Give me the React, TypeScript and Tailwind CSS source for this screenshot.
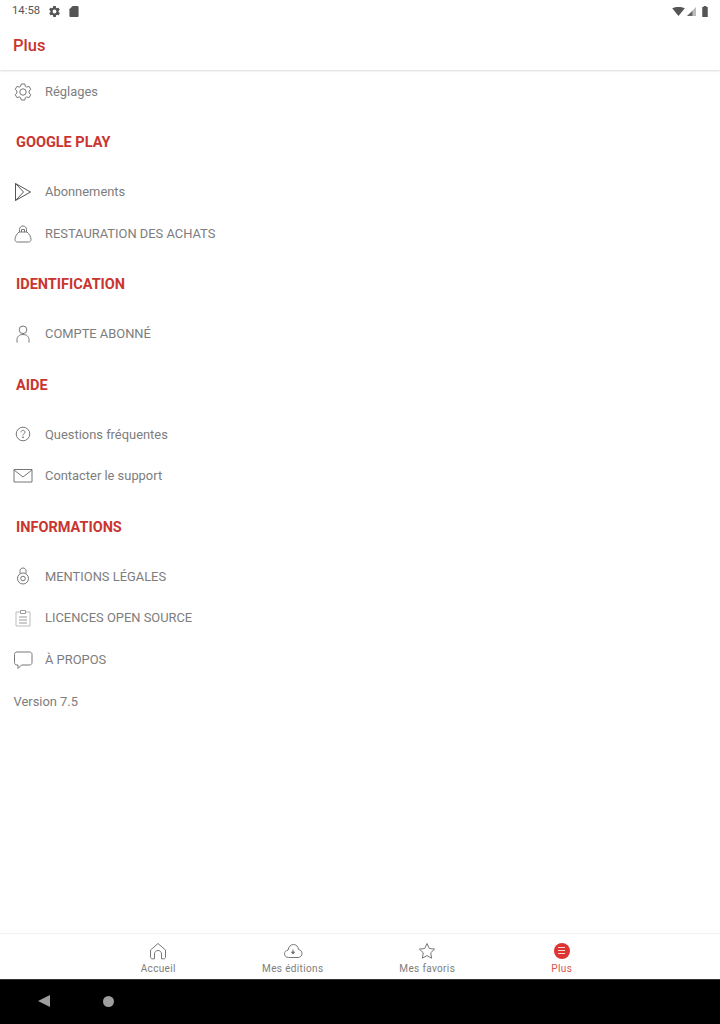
import type { ReactNode } from 'react';

const font = { fontFamily: 'Roboto, sans-serif' };

function Icon({ children, className = 'w-[20px] h-[20px]' }: { children: ReactNode; className?: string }) {
  return (
    <svg viewBox="0 0 20 20" fill="none" stroke="#777" strokeWidth="1" className={className}>
      {children}
    </svg>
  );
}

const GearIcon = () => (
  <Icon>
    <path d="M8.2 2h3.6l.5 2.3 1.5.8 2.2-.8 1.8 3.1-1.7 1.5v2.2l1.7 1.5-1.8 3.1-2.2-.8-1.5.8-.5 2.3H8.2l-.5-2.300-1.500-.8-2.200.8-1.800-3.100 1.700-1.500V8.900L2.200 7.400 4 4.300l2.200.8 1.500-.8z" strokeLinejoin="round" />
    <circle cx="10" cy="10" r="3.2" />
  </Icon>
);
const PlayIcon = () => (
  <Icon>
    <path d="M2.5 1.500 17.500 10 2.500 18.500z M2.500 1.500 10.500 10 2.500 18.500" strokeLinejoin="round" stroke="#555" />
  </Icon>
);
const BagIcon = () => (
  <Icon>
    <path d="M6 8C3.500 10 2 13 2 15.500 2 17 3 18 4.500 18h11c1.500 0 2.500-1 2.500-2.500C18 13 16.500 10 14 8z" strokeLinejoin="round" />
    <path d="M6.500 8V5.500C6.500 3.500 8 2 10 2s3.500 1.500 3.500 3.500V8" />
    <path d="M8.500 8V5.500h3V8" />
  </Icon>
);
const PersonIcon = () => (
  <Icon>
    <circle cx="10" cy="5.800" r="3.800" />
    <path d="M4 18.500v-3c0-3 2.500-5 6-5s6 2 6 5v3" />
  </Icon>
);
const QuestionIcon = () => (
  <Icon>
    <circle cx="10" cy="10" r="6.800" />
    <path d="M8 8.300c0-1.200.9-2 2-2s2 .8 2 1.900c0 1.600-2 1.600-2 3.200" />
    <circle cx="10" cy="13.300" r=".5" fill="#777" />
  </Icon>
);
const MailIcon = () => (
  <Icon>
    <path d="M1 3.500h18v12.500H1z" />
    <path d="M1 4 10 11l9-7" />
  </Icon>
);
const LockIcon = () => (
  <Icon>
    <path d="M7 7.500V4.800C7 3.200 8.300 2 10 2s3 1.200 3 2.800v2.700" />
    <circle cx="10" cy="12.500" r="5.500" />
    <circle cx="10" cy="12.500" r="2.300" />
  </Icon>
);
const ClipboardIcon = () => (
  <Icon>
    <path d="M7 4H3v14h14V4h-4" stroke="#bbb" />
    <path d="M7.500 5.500V2.500h5v3z" stroke="#999" />
    <path d="M6 9h8M6 12h8M6 15h8" stroke="#999" />
  </Icon>
);
const ChatIcon = () => (
  <Icon>
    <path d="M4 2h12.500C18 2 19 3 19 4.500v8c0 1.500-1 2.500-2.500 2.500H8.500L5 18.500V15H4c-1.500 0-2.500-1-2.500-2.500v-8C1.500 3 2.500 2 4 2z" strokeLinejoin="round" />
  </Icon>
);

function Row({ icon, label }: { icon: ReactNode; label: string }) {
  return (
    <div className="flex items-center h-[41.67px]">
      <div className="w-[45px] pl-[12.5px] flex-none">{icon}</div>
      <span className="text-[12.9px] text-[#7d7d7d]">{label}</span>
    </div>
  );
}

function Heading({ children }: { children: string }) {
  return (
    <div className="h-[58.67px] pl-[16px] pt-[2.5px] flex items-center text-[14.5px] font-bold text-[#c9352f]">
      {children}
    </div>
  );
}

function NavItem({ icon, label, active }: { icon: ReactNode; label: string; active?: boolean }) {
  return (
    <div className="w-[134.5px] flex flex-col items-center">
      <div className="h-[21px] flex items-center justify-center">{icon}</div>
      <span className={`text-[10px] tracking-[0.35px] leading-[15px] ${active ? 'text-[#d9534f]' : 'text-[#7d7d7d]'}`}>
        {label}
      </span>
    </div>
  );
}

export default function App() {
  return (
    <div className="w-[720px] h-[1024px] flex flex-col bg-white overflow-hidden" style={font}>
      {/* status bar */}
      <div className="h-[22px] flex-none flex items-center px-[12px] justify-between">
        <div className="flex items-center gap-[8px]">
          <span className="text-[11.3px] text-[#555]">14:58</span>
          <svg viewBox="0 0 24 24" fill="#555" className="w-[13px] h-[13px]">
            <path d="M19.400 13c.1-.3.1-.7.1-1s0-.7-.1-1l2.100-1.600c.2-.1.2-.4.1-.6l-2-3.500c-.1-.2-.4-.3-.6-.2l-2.500 1c-.5-.4-1.100-.7-1.700-1l-.4-2.600c0-.3-.2-.5-.5-.5h-4c-.3 0-.5.2-.5.400l-.4 2.700c-.6.2-1.100.6-1.700 1l-2.500-1c-.2-.1-.5 0-.6.2l-2 3.500c-.1.2-.1.5.1.6L4.600 11c0 .3-.1.7-.1 1s0 .7.1 1l-2.100 1.600c-.2.1-.2.4-.1.6l2 3.500c.1.2.4.3.6.2l2.500-1c.5.4 1.100.7 1.700 1l.4 2.600c0 .3.2.5.5.5h4c.3 0 .5-.2.5-.4l.4-2.700c.6-.2 1.200-.6 1.700-1l2.500 1c.2.1.5 0 .6-.2l2-3.500c.1-.2.1-.5-.1-.6zM12 15.500a3.500 3.500 0 1 1 0-7 3.500 3.500 0 0 1 0 7z" />
          </svg>
          <svg viewBox="0 0 10 12" fill="#555" className="w-[10px] h-[11px]">
            <path d="M3.500 0H9c.6 0 1 .4 1 1v10c0 .6-.4 1-1 1H1c-.6 0-1-.4-1-1V3.500z" />
          </svg>
        </div>
        <div className="flex items-center">
          <svg viewBox="0 0 14 10" fill="#555" className="w-[13px] h-[9px]">
            <path d="M0 1.500C4 -.5 10 -.5 14 1.500L7 10z" />
          </svg>
          <svg viewBox="0 0 10 10" className="w-[9px] h-[9px] ml-[2px]">
            <path d="M10 0v10H0z" fill="#bbb" />
            <path d="M6 4.500V10H0z" fill="#666" />
          </svg>
          <svg viewBox="0 0 6 12" fill="#555" className="w-[6px] h-[11px] ml-[6px]">
            <path d="M1.500 0h3v1H6v11H0V1h1.500z" />
          </svg>
        </div>
      </div>

      {/* top bar */}
      <div className="h-[48px] flex-none flex items-center pl-[13px] text-[16.5px] font-medium text-[#c9352f] shadow-[0_1px_2px_rgba(0,0,0,0.15)] relative">
        Plus
      </div>

      {/* menu */}
      <div className="flex-1 pt-[1px]">
        <Row icon={<GearIcon />} label="Réglages" />
        <Heading>GOOGLE PLAY</Heading>
        <Row icon={<PlayIcon />} label="Abonnements" />
        <Row icon={<BagIcon />} label="RESTAURATION DES ACHATS" />
        <Heading>IDENTIFICATION</Heading>
        <Row icon={<PersonIcon />} label="COMPTE ABONNÉ" />
        <Heading>AIDE</Heading>
        <Row icon={<QuestionIcon />} label="Questions fréquentes" />
        <Row icon={<MailIcon />} label="Contacter le support" />
        <Heading>INFORMATIONS</Heading>
        <Row icon={<LockIcon />} label="MENTIONS LÉGALES" />
        <Row icon={<ClipboardIcon />} label="LICENCES OPEN SOURCE" />
        <Row icon={<ChatIcon />} label="À PROPOS" />
        <div className="h-[41.67px] flex items-center pl-[13.5px] text-[12.9px] text-[#7d7d7d]">Version 7.5</div>
      </div>

      {/* bottom nav */}
      <div className="h-[46px] flex-none flex justify-center pt-[6px] border-t border-[#f3f3f3]">
        <NavItem
          label="Accueil"
          icon={
            <Icon>
              <path d="M2.500 9 10 2.500 17.500 9v7c0 1-.7 1.800-1.700 1.800H13.500V13c0-2-1.500-3.500-3.500-3.500S6.500 11 6.500 13v4.800H4.200c-1 0-1.700-.8-1.700-1.800z" strokeLinejoin="round" />
            </Icon>
          }
        />
        <NavItem
          label="Mes éditions"
          icon={
            <Icon>
              <path d="M5.500 16.500C3 16.500 1.500 14.700 1.500 12.800c0-2 1.500-3.500 3.500-3.600C5.500 6 7.500 3.500 10.500 3.500c2.800 0 4.700 2.200 5 5 2 .3 3.500 1.800 3.500 3.900 0 2.300-1.700 4.100-4 4.100z" />
              <path d="M10 8.500v3.500M8.500 11h3L10 13z" fill="#777" />
            </Icon>
          }
        />
        <NavItem
          label="Mes favoris"
          icon={
            <Icon>
              <path d="M10 2.500l2.300 5 5.300.6-3.900 3.700 1 5.400L10 14.600l-4.700 2.600 1-5.400-3.900-3.700 5.300-.6z" strokeLinejoin="round" />
            </Icon>
          }
        />
        <NavItem
          active
          label="Plus"
          icon={
            <div className="w-[16px] h-[16px] rounded-full bg-[#dd3333] flex flex-col items-center justify-center gap-[2px]">
              <div className="w-[7px] h-px bg-white/80" />
              <div className="w-[7px] h-px bg-white/80" />
              <div className="w-[7px] h-px bg-white/80" />
            </div>
          }
        />
      </div>

      {/* android nav */}
      <div className="h-[45px] flex-none bg-black relative border-t border-[#333]">
        <svg viewBox="0 0 12 12" fill="#9e9e9e" className="absolute left-[38px] top-[15px] w-[12px] h-[12px]">
          <path d="M0 6 12 0v12z" />
        </svg>
        <div className="absolute left-[103px] top-[16px] w-[11px] h-[11px] rounded-full bg-[#9e9e9e]" />
      </div>
    </div>
  );
}
